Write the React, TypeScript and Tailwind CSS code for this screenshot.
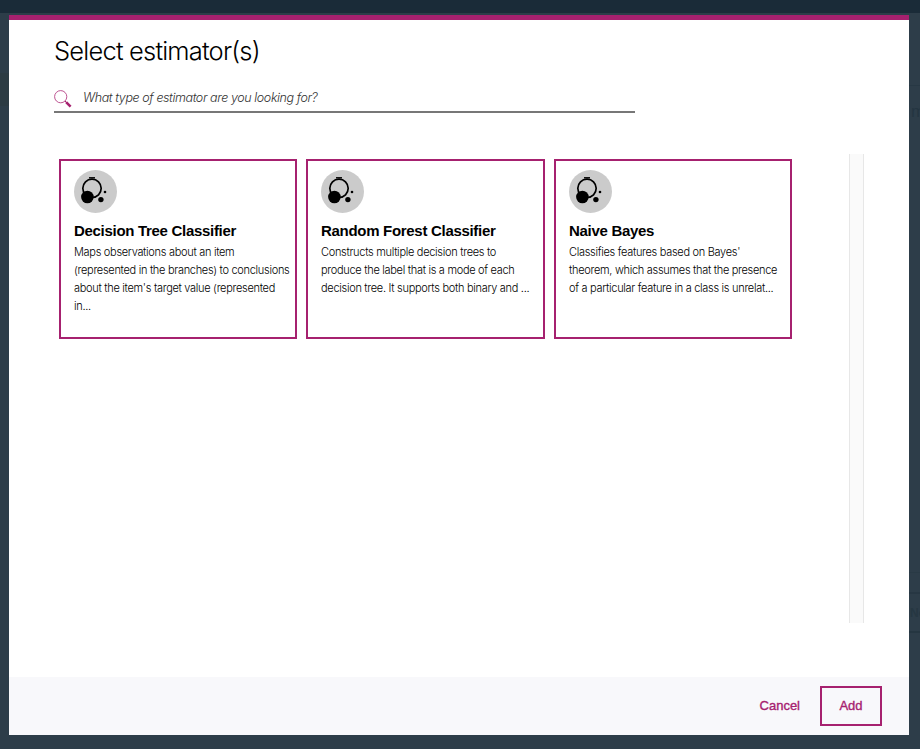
import React from "react";

type Estimator = { name: string; lines: { text: string; tracking: string }[]; box: string };

const estimators: Estimator[] = [
  {
    name: "Decision Tree Classifier",
    box: "w-[238px]",
    lines: [
      { text: "Maps observations about an item", tracking: "tracking-[-0.3px]" },
      { text: "(represented in the branches) to conclusions", tracking: "tracking-[-0.3px]" },
      { text: "about the item's target value (represented", tracking: "tracking-[-0.3px]" },
      { text: "in...", tracking: "tracking-[-0.3px]" },
    ],
  },
  {
    name: "Random Forest Classifier",
    box: "w-[239px] ml-[9px]",
    lines: [
      { text: "Constructs multiple decision trees to", tracking: "tracking-[-0.3px]" },
      { text: "produce the label that is a mode of each", tracking: "tracking-[-0.3px]" },
      { text: "decision tree. It supports both binary and ...", tracking: "tracking-[-0.3px]" },
    ],
  },
  {
    name: "Naive Bayes",
    box: "w-[238px] ml-[9px]",
    lines: [
      { text: "Classifies features based on Bayes'", tracking: "tracking-[-0.3px]" },
      { text: "theorem, which assumes that the presence", tracking: "tracking-[-0.3px]" },
      { text: "of a particular feature in a class is unrelat...", tracking: "tracking-[-0.3px]" },
    ],
  },
];

function EstimatorIcon() {
  return (
    <svg width="43" height="43" viewBox="0 0 43 43" className="block">
      <circle cx="21.5" cy="21.5" r="21.5" fill="#cbcbcb" />
      <circle cx="18" cy="18.3" r="9.2" fill="none" stroke="#000" strokeWidth="1.7" />
      <path d="M15 7.8h6" stroke="#000" strokeWidth="1.4" />
      <circle cx="13.4" cy="27" r="6.3" />
      <circle cx="26.9" cy="29.6" r="2.7" />
      <circle cx="31" cy="22" r="1.3" />
    </svg>
  );
}

function EstimatorCard({ item }: { item: Estimator }) {
  return (
    <div className={`${item.box} h-[180px] shrink-0 border-2 border-[#a6216f] pl-[13px] pt-[9px]`}>
      <EstimatorIcon />
      <h2 className="mt-2 h-5 whitespace-nowrap font-['Liberation_Sans',Arial,sans-serif] text-[15px] font-bold leading-5 tracking-[-0.3px] text-black">
        {item.name}
      </h2>
      <div className="mt-[2px] text-[11px] font-light leading-[18px] text-black">
        {item.lines.map((line) => (
          <p key={line.text} className="whitespace-nowrap">
            <span className={line.tracking}>{line.text}</span>
          </p>
        ))}
      </div>
    </div>
  );
}

export default function App() {
  return (
    <div className="h-[749px] w-[920px] overflow-hidden bg-[#2d3d49] font-[Inter,'Liberation_Sans',sans-serif]">
      <div className="h-[13px] bg-[#1a2b38]" />
      <div className="flex h-[736px] pt-[2px]">
        <div className="w-[9px] shrink-0 pt-[58px]">
          <div className="h-[33px] bg-[#2c3b43]" />
        </div>
        <div className="flex h-[720px] w-[900px] shrink-0 flex-col border-t-[5px] border-[#a6216f] bg-white">
          <div className="flex h-[657px] flex-col pl-[45px] pt-[15px]">
            <h1 className="h-8 whitespace-nowrap text-[25.5px] font-light leading-8 text-black">
              <span className="tracking-[-0.8px]">Select estimator(s)</span>
            </h1>
            <div className="mt-[19px] flex h-[27px] w-[581px] border-b-2 border-[#777]">
              <svg width="18" height="18" viewBox="0 0 18 18" fill="none" className="mt-1 shrink-0">
                <circle cx="6.7" cy="6.7" r="6.1" stroke="#b64286" strokeWidth="0.9" />
                <path d="M11 11l1.5 1.5" stroke="#a6216f" strokeWidth="1" />
                <path d="M12.1 12.1l4.5 4.5" stroke="#a6216f" strokeWidth="2.5" />
              </svg>
              <p className="ml-[11px] mt-[2px] whitespace-nowrap text-[12.5px] font-light italic leading-5 text-[#333]">
                <span className="tracking-[-0.4px]">What type of estimator are you looking for?</span>
              </p>
            </div>
            <div className="mt-[41px] flex h-[469px]">
              <div className="flex w-[795px] pl-[5px] pt-[5px]">
                {estimators.map((item) => (
                  <EstimatorCard key={item.name} item={item} />
                ))}
              </div>
              <div className="w-[15px] border-x border-[#e7e7e7] bg-[#fafafa]" />
            </div>
          </div>
          <div className="flex h-[58px] items-center justify-end bg-[#f8f8fb] pr-[27px] font-['Liberation_Sans',Arial,sans-serif] text-[13px] text-[#a6216f]">
            <button className="mr-5 [-webkit-text-stroke:0.35px_#a6216f]">Cancel</button>
            <button className="h-10 w-[62px] border-2 border-[#a6216f] [-webkit-text-stroke:0.35px_#a6216f]">Add</button>
          </div>
        </div>
        <div className="w-[11px] shrink-0 overflow-hidden pt-[70px] font-['Liberation_Sans',Arial,sans-serif] text-[#243541]">
          <div className="h-px bg-[#273844]" />
          <p className="mt-[14px] h-6 pl-[2px] text-[17px] leading-6">m</p>
          <div className="mt-[448px] h-px bg-[#293a45]" />
          <div className="mt-[19px] h-[2px] bg-[#273743]" />
          <p className="mt-[9px] h-5 pl-px text-[12px] font-bold leading-5 text-[#263742]">No</p>
          <div className="mt-2 h-[2px] bg-[#253641]" />
        </div>
      </div>
    </div>
  );
}
